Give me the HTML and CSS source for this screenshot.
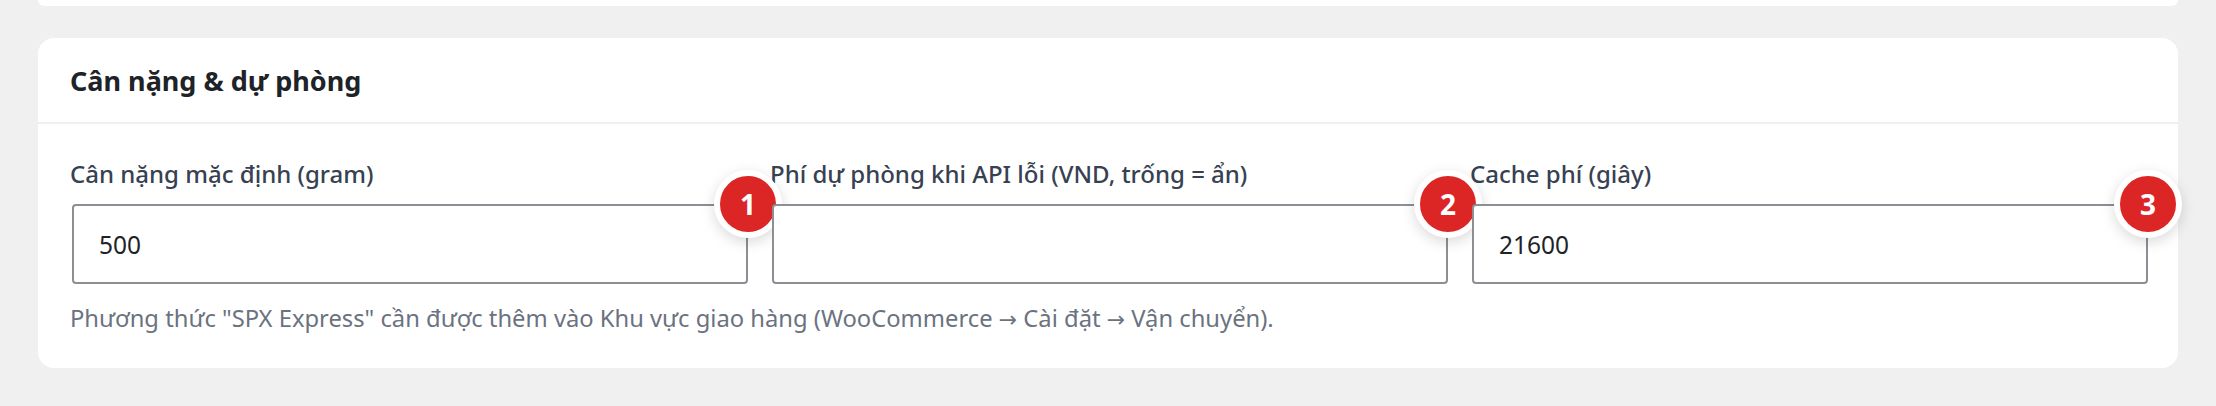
FILE: index.html

```html
<!DOCTYPE html>
<html lang="vi">
  <head>
    <meta charset="UTF-8" />
    <title>Cân nặng &amp; dự phòng</title>
    <link rel="stylesheet" href="styles.css">
  </head>
  <body>
    <div class="card card-prev"></div>
    <div class="card">
      <div class="card-header">
        <h2>Cân nặng &amp; dự phòng</h2>
      </div>
      <div class="card-body">
        <div class="fields">
          <div class="field">
            <label for="weight">Cân nặng mặc định (gram)</label>
            <div class="input-wrap">
              <input type="text" id="weight" value="500" />
              <span class="badge">1</span>
            </div>
          </div>
          <div class="field">
            <label for="fallback">Phí dự phòng khi API lỗi (VND, trống = ẩn)</label>
            <div class="input-wrap">
              <input type="text" id="fallback" />
              <span class="badge">2</span>
            </div>
          </div>
          <div class="field">
            <label for="cache">Cache phí (giây)</label>
            <div class="input-wrap">
              <input type="text" id="cache" value="21600" />
              <span class="badge">3</span>
            </div>
          </div>
        </div>
        <p class="help">Phương thức "SPX Express" cần được thêm vào Khu vực giao hàng (WooCommerce <span class="arrow">→</span> Cài đặt <span class="arrow">→</span> Vận chuyển).</p>
      </div>
    </div>
  </body>
</html>
```

FILE: styles.css

```css
body {
  margin: 0;
  padding: 0 38px;
  height: 406px;
  overflow: hidden;
  background: #f0f0f0;
  font-family: "Noto Sans", "Open Sans", sans-serif;
}
.card {
  background: #fff;
  border-radius: 16px;
  height: 330px;
  box-sizing: border-box;
}
.card-prev {
  height: 6px;
  border-radius: 0 0 16px 16px;
  margin-bottom: 32px;
}
.card-header {
  height: 86px;
  box-sizing: border-box;
  border-bottom: 2px solid #f0f0f1;
  padding: 0 32px;
  display: flex;
  align-items: center;
}
.card-header h2 {
  margin: 0;
  font-size: 27px;
  font-weight: 700;
  color: #1d2327;
}
.card-body {
  padding: 32px 28px 0 32px;
}
.fields {
  display: grid;
  grid-template-columns: repeat(3, 680px);
  gap: 20px;
}
.field label {
  display: block;
  height: 48px;
  line-height: 36px;
  font-size: 24px;
  font-weight: 500;
  color: #374151;
  white-space: nowrap;
}
.input-wrap {
  position: relative;
  margin: 0 2px;
}
.input-wrap input {
  display: block;
  width: 100%;
  height: 80px;
  box-sizing: border-box;
  padding: 0 25px;
  border: 2px solid #8c8f94;
  border-radius: 4px;
  background: #fff;
  font-family: inherit;
  font-size: 24.5px;
  color: #1d2327;
  outline: none;
}
.badge {
  position: absolute;
  top: -34px;
  right: -34px;
  width: 56px;
  height: 56px;
  border: 6px solid #fff;
  border-radius: 50%;
  background: #dc2626;
  color: #fff;
  font-size: 28px;
  font-weight: 700;
  display: flex;
  align-items: center;
  justify-content: center;
  box-shadow: 0 4px 14px rgba(0, 0, 0, 0.15);
}
.help {
  margin: 16px 0 0;
  font-size: 23.75px;
  line-height: 36px;
  color: #6b7280;
}
.arrow {
  font-family: "DejaVu Sans", sans-serif;
  font-size: 22px;
}
```
